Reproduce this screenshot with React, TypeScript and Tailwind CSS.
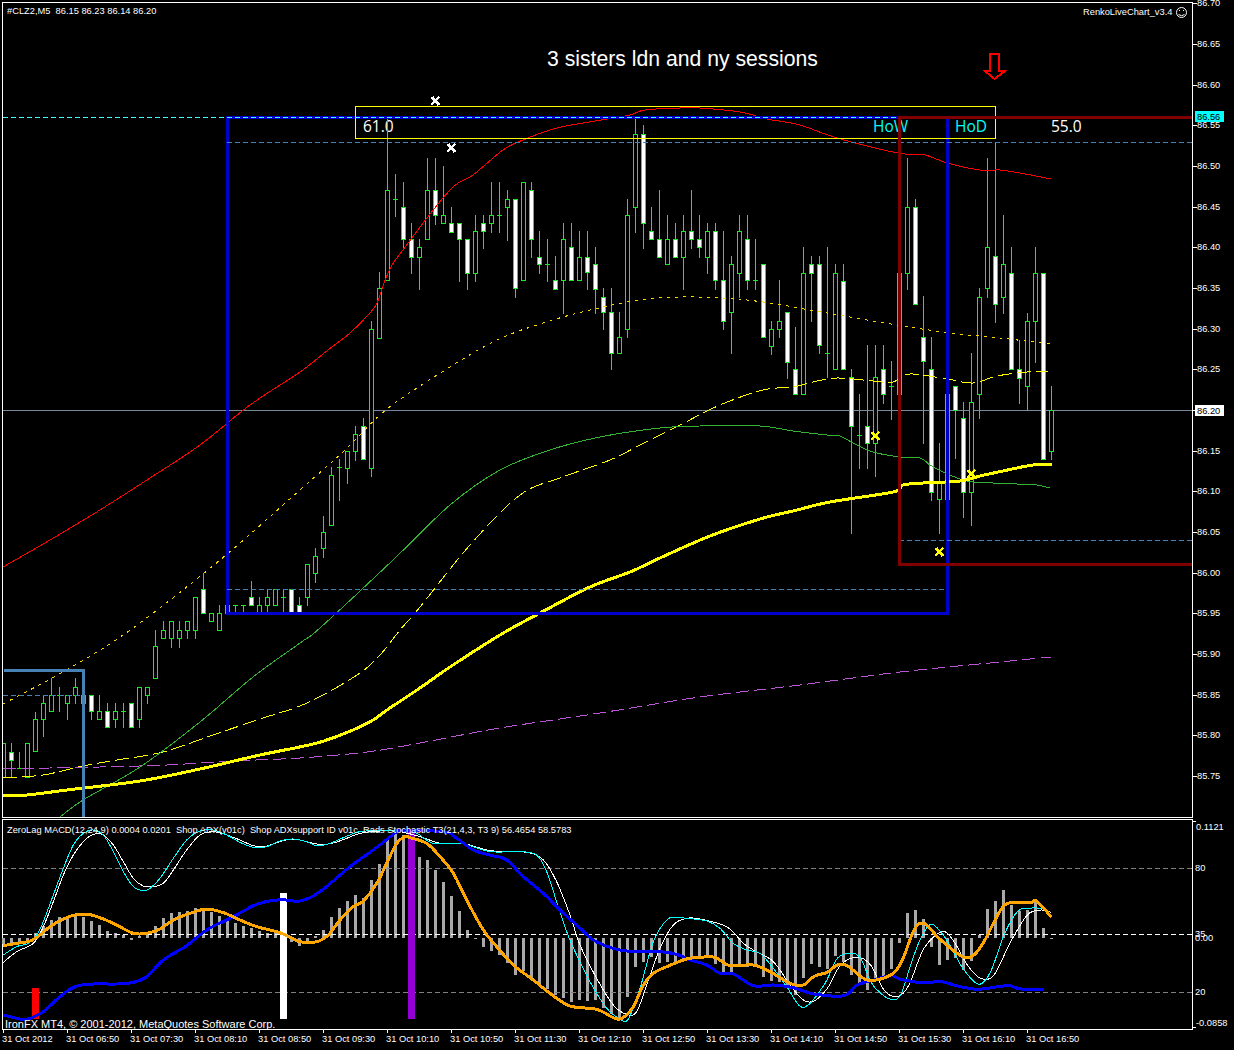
import React from "react";

type C = [number, number, number, number, number, number];
// x, high, body top, body bottom, low, filled (1 white, 0 hollow)
const candles: C[] = [
  [3,743,743,777,777,0],[11,743,752,760,777,1],[19,752,768,768,768,0],[27,743,743,777,777,0],[35,712,719,751,751,0],
  [43,695,703,719,736,0],[51,678,695,711,711,0],[59,687,695,695,711,0],[67,695,695,703,719,0],[75,678,687,695,703,0],
  [83,695,695,703,711,0],[91,695,695,711,719,1],[99,695,711,719,719,0],[107,703,711,727,727,1],[115,703,711,719,727,0],
  [123,703,711,711,727,0],[131,703,703,727,727,1],[139,687,687,719,727,0],[147,687,687,695,703,0],[155,630,646,678,678,0],
  [163,621,630,638,638,0],[171,621,621,638,647,0],[179,621,630,638,647,0],[187,621,621,630,638,0],[195,597,597,630,638,0],
  [203,573,589,613,613,1],[211,613,613,621,621,0],[219,605,613,630,630,0],[227,605,605,613,613,0],[235,605,605,605,613,0],
  [243,605,605,605,613,0],[251,581,597,605,605,1],[259,597,605,613,613,0],[267,589,597,605,613,0],[275,589,589,605,605,0],
  [283,589,597,597,613,0],[291,589,589,613,613,1],[299,597,605,613,613,1],[307,564,564,597,605,0],[315,548,556,573,582,0],
  [323,516,532,548,557,0],[331,467,475,525,525,0],[339,459,467,467,500,0],[347,451,451,468,483,0],[355,426,434,451,460,0],
  [363,418,426,459,459,1],[371,321,329,468,476,0],[379,272,288,338,338,0],[387,118,190,280,280,0],[395,174,199,199,216,0],
  [403,182,207,239,248,1],[411,223,239,257,273,1],[419,239,247,257,289,0],[427,158,190,239,239,0],[435,158,190,215,224,1],
  [443,166,215,223,223,0],[451,207,223,232,232,1],[459,223,223,239,281,1],[467,239,239,273,289,1],[475,215,231,273,281,0],
  [483,215,223,231,248,1],[491,182,215,223,232,0],[499,182,215,215,232,0],[507,190,199,207,240,0],[515,199,199,288,297,1],
  [523,182,182,280,280,0],[531,182,190,239,257,1],[539,231,257,264,273,1],[547,239,264,264,281,0],[555,256,280,289,289,1],
  [563,223,239,280,313,0],[571,223,247,280,280,1],[579,231,257,280,280,0],[587,231,257,272,289,1],[595,247,264,289,313,1],
  [603,288,297,312,329,1],[611,288,312,353,369,1],[619,312,337,353,353,0],[627,199,215,329,337,0],[635,119,134,207,232,0],
  [643,125,134,223,248,1],[651,207,231,239,239,1],[659,190,239,257,257,1],[667,215,239,264,264,0],[675,223,239,257,257,1],
  [683,215,231,257,289,0],[691,190,231,239,248,1],[699,215,239,247,257,1],[707,223,231,257,273,0],[715,223,231,280,289,1],
  [723,231,280,321,329,1],[731,256,264,312,353,0],[739,215,231,273,297,0],[747,215,239,280,289,1],[755,239,280,280,289,0],
  [763,264,264,337,337,1],[771,321,329,346,354,0],[779,280,321,329,337,0],[787,312,312,362,378,1],[795,327,369,394,394,1],
  [803,247,273,394,394,0],[811,256,264,273,321,1],[819,256,264,345,353,1],[827,247,353,353,377,0],[835,264,273,369,369,0],
  [843,264,281,369,369,1],[851,369,377,426,533,1],[859,394,435,435,468,0],[867,345,426,443,468,1],[875,345,377,443,476,0],
  [883,345,369,394,403,1],[891,361,386,386,419,0],[899,273,273,394,394,0],[907,158,207,273,289,0],[915,199,207,304,304,1],
  [923,296,337,361,443,1],[931,337,369,492,500,1],[939,443,483,499,533,0],[947,394,394,499,499,0],[955,386,386,410,458,1],
  [963,402,418,492,517,1],[971,353,402,492,525,0],[979,288,297,394,418,0],[987,158,247,288,297,0],[995,143,256,304,322,1],
  [1003,215,264,297,313,0],[1011,247,273,369,369,1],[1019,340,369,378,403,1],[1027,313,321,386,410,0],[1035,247,273,321,362,0],
  [1043,273,273,459,459,1],[1051,386,410,451,459,0],
];

const hist: number[] = [
  387,385,383,380,355,333,316,306,303,300,306,318,330,348,354,360,374,363,358,333,309,294,291,288,279,282,291,303,315,324,333,339,348,355,352,352,381,393,378,363,345,306,279,258,240,249,195,147,75,54,
  60,50,126,135,165,201,243,288,345,371,396,408,420,444,480,468,492,510,522,540,549,561,555,558,555,579,597,612,546,456,441,426,444,441,441,435,435,429,426,447,474,471,447,456,453,486,498,501,516,540,489,447,456,462,423,441,480,504,525,498,483,462,384,294,285,312,396,450,435,429,465,438,360,282,258,225,270,288,285,258,339,371,
];

type P = [number, number];
const smooth = (pts: P[]) => {
  let d = `M${pts[0][0]} ${pts[0][1]}`;
  for (let i = 0; i < pts.length - 1; i++) {
    const p0 = pts[Math.max(i - 1, 0)], p1 = pts[i], p2 = pts[i + 1], p3 = pts[Math.min(i + 2, pts.length - 1)];
    d += ` C${(p1[0] + (p2[0] - p0[0]) / 6).toFixed(1)} ${(p1[1] + (p2[1] - p0[1]) / 6).toFixed(1)} ${(p2[0] - (p3[0] - p1[0]) / 6).toFixed(1)} ${(p2[1] - (p3[1] - p1[1]) / 6).toFixed(1)} ${p2[0]} ${p2[1]}`;
  }
  return d;
};
const z = (ox: number, a: P[]): P[] => a.map(([x, y]) => [ox + x / 3, 815 + y / 3]);

const red: P[] = [[3,567],[50,540],[100,510],[150,478],[200,445],[250,405],[300,372],[328,350],[350,333],[370,313],[377,303],[384,283],[392,265],[403,250],[427,218],[453,187],[473,175],[503,150],[523,140],[557,128],[607,119],[630,115],[645,110],[680,108],[700,108],[740,112],[767,119],[800,125],[837,138],[898,153],[925,155],[947,163],[980,170],[1000,170],[1020,173],[1051,179]];
const gold: P[] = [[3,704],[70,668],[133,628],[220,560],[300,490],[345,450],[380,415],[417,388],[493,342],[553,320],[603,307],[640,300],[680,297],[720,298],[763,302],[827,313],[897,325],[950,333],[1000,338],[1050,344]];
const yel: P[] = [[3,778],[43,775],[83,766],[117,760],[163,752],[213,735],[260,719],[307,703],[357,675],[380,655],[400,630],[420,607],[470,545],[520,495],[560,478],[610,460],[640,445],[680,425],[720,405],[763,390],[793,387],[813,382],[837,378],[873,381],[893,382],[910,374],[947,379],[973,383],[997,376],[1027,372],[1048,372]];
const green: P[] = [[60,817],[83,800],[140,767],[200,722],[253,677],[300,643],[320,628],[393,560],[450,505],[500,470],[550,450],[600,437],[660,428],[700,426],[760,426],[793,431],[827,435],[840,436],[853,443],[873,452],[900,457],[920,458],[930,465],[943,472],[960,479],[973,482],[993,483],[1017,484],[1037,485],[1050,488]];
const thick: P[] = [[3,795],[27,795],[67,790],[140,781],[200,769],[260,755],[317,743],[353,730],[373,720],[387,710],[420,688],[450,667],[500,635],[540,613],[590,587],[630,572],[660,558],[710,536],[760,519],[793,511],[830,502],[893,492],[903,485],[923,483],[960,481],[980,476],[1003,471],[1033,465],[1052,465]];
const purple: P[] = [[3,769],[50,768],[100,767],[167,765],[233,761],[300,758],[367,752],[420,743],[500,728],[600,713],[700,697],[800,685],[900,672],[1000,662],[1051,657]];

const cyanL: P[] = [
  ...z(0,[[10,420],[50,395],[85,385],[110,360],[130,320],[160,240],[190,160],[220,90],[250,55],[280,45],[310,60],[340,110],[370,170],[400,215],[430,227],[450,220],[480,190],[520,130],[560,75],[600,48],[640,45],[680,60],[720,82],[760,97],[800,95],[840,78],[880,72],[920,80],[950,92],[990,85],[1030,68],[1080,50],[1140,47],[1200,47]]),
  ...z(400,[[50,55],[100,85],[190,87],[270,110],[360,110],[410,120],[440,170],[470,260],[500,350],[530,420],[570,500],[620,580],[660,612],[685,612],[720,520],[760,380],[800,315],[830,307],[860,310],[920,318],[960,340],[1000,385],[1040,405],[1080,415],[1120,460],[1160,515],[1210,577]]),
  ...z(814,[[30,510],[70,430],[110,415],[140,430],[170,500],[200,535],[232,553],[260,540],[290,450],[320,370],[350,328],[380,350],[410,395],[450,465],[495,508],[530,470],[570,360],[610,290],[640,280],[690,282],[712,305]]),
];
const whiteL: P[] = [
  ...z(0,[[10,442],[50,410],[100,385],[130,335],[160,260],[190,180],[220,120],[250,80],[280,58],[310,60],[340,90],[370,140],[400,190],[430,213],[460,215],[490,205],[520,165],[560,105],[600,60],[640,50],[680,60],[720,75],[760,92],[800,93],[840,80],[880,72],[920,80],[960,88],[1000,84],[1040,70],[1080,55],[1140,48],[1200,50]]),
  ...z(400,[[70,68],[120,85],[200,88],[270,107],[380,112],[430,135],[470,200],[510,300],[540,390],[590,490],[640,570],[680,598],[710,590],[740,510],[780,400],[820,330],[860,310],[900,312],[980,335],[1030,385],[1060,405],[1120,440],[1170,510],[1210,555]]),
  ...z(814,[[0,558],[40,520],[80,450],[130,427],[170,450],[210,525],[250,545],[285,510],[330,400],[385,350],[420,380],[460,450],[500,490],[540,480],[590,380],[640,300],[680,285],[712,292]]),
];
const orange: P[] = [
  ...z(0,[[10,392],[50,385],[90,378],[120,360],[150,335],[190,312],[230,299],[270,299],[310,312],[350,330],[400,355],[440,355],[480,342],[520,315],[570,295],[620,282],[670,293],[720,315],[770,335],[830,350],[860,362],[900,380],[950,380],[985,360],[1020,315],[1060,275],[1090,258],[1130,205],[1160,145],[1190,85],[1215,65]]),
  ...z(400,[[30,68],[80,85],[120,125],[160,175],[200,255],[250,345],[290,395],[340,450],[400,495],[450,535],[510,573],[590,583],[640,608],[665,610],[700,575],[730,510],[760,475],[800,455],[860,432],[900,427],[945,427],[990,452],[1060,450],[1110,470],[1170,505],[1210,510]]),
  ...z(814,[[0,484],[40,472],[70,450],[100,452],[160,495],[230,480],[265,435],[300,345],[330,325],[370,365],[410,400],[450,427],[480,420],[510,380],[560,285],[590,263],[650,263],[665,257],[690,280],[712,307]]),
];
const blueL: P[] = [
  ...z(0,[[10,600],[60,612],[90,610],[130,590],[180,545],[225,515],[280,507],[350,507],[400,502],[440,485],[490,435],[560,392],[620,345],[700,305],[770,268],[840,254],[900,258],[960,230],[1050,155],[1120,105],[1190,50]]),
  ...z(400,[[0,47],[130,50],[170,70],[220,105],[270,120],[320,135],[370,185],[430,235],[480,285],[530,330],[580,375],[630,397],[680,408],[780,410],[830,418],[870,435],[920,450],[960,475],[1000,477],[1060,512],[1120,510],[1180,518]]),
  ...z(814,[[0,537],[90,542],[130,510],[180,495],[230,482],[260,493],[320,503],[380,500],[420,510],[490,523],[580,512],[620,522],[690,525]]),
];

const Line = ({ pts, c, w = 1, dash }: { pts: P[]; c: string; w?: number; dash?: string }) => (
  <path d={smooth(pts)} fill="none" stroke={c} strokeWidth={w} strokeDasharray={dash} shapeRendering="crispEdges" />
);

const Candle = ({ d }: { d: C }) => {
  const [x, hi, top, bot, lo, f] = d;
  return (
    <g shapeRendering="crispEdges">
      <rect x={x} y={hi} width={1} height={lo - hi + 1} fill="#22e622" />
      {top === bot ? (
        <rect x={x - 2} y={top} width={5} height={1} fill="#22e622" />
      ) : (
        <rect x={x - 1.5} y={top + 0.5} width={4} height={bot - top} fill={f ? "#ffffff" : "#000000"} stroke="#22e622" strokeWidth={1} />
      )}
    </g>
  );
};

const Mark = ({ x, y, c }: { x: number; y: number; c: string }) => (
  <g stroke={c} shapeRendering="crispEdges" fill="none">
    <path d={`M${x - 4} ${y + 4} L${x + 4} ${y - 4}`} strokeWidth={2} />
    <path d={`M${x - 3} ${y - 4} L${x + 4} ${y + 4}`} strokeWidth={3} />
  </g>
);

const prices: [string, number][] = [
  ["86.70",3],["86.65",44],["86.60",85],["86.55",125],["86.50",166],["86.45",207],["86.40",247],["86.35",288],["86.30",329],["86.25",369],
  ["86.15",451],["86.10",491],["86.05",532],["86.00",573],["85.95",613],["85.90",654],["85.85",695],["85.80",735],["85.75",776],
];
const times: [string, number][] = [
  ["31 Oct 2012",3],["31 Oct 06:50",67],["31 Oct 07:30",131],["31 Oct 08:10",195],["31 Oct 08:50",259],["31 Oct 09:30",323],["31 Oct 10:10",387],["31 Oct 10:50",451],
  ["31 Oct 11:30",515],["31 Oct 12:10",579],["31 Oct 12:50",643],["31 Oct 13:30",707],["31 Oct 14:10",771],["31 Oct 14:50",835],["31 Oct 15:30",899],["31 Oct 16:10",963],["31 Oct 16:50",1027],
];
const small = "font-['Liberation_Sans',Arial,sans-serif] text-[9.3px]";
const thin = "font-['Open_Sans',sans-serif] text-[15.5px] font-normal";

export default function App() {
  return (
    <div className="flex h-[1050px] w-[1234px] flex-col overflow-hidden bg-black pl-[2px] pt-[2px] font-['Liberation_Sans',Arial,sans-serif] text-white">
      {/* main chart + price axis */}
      <div className="flex h-[816px]">
        <div className="h-[816px] w-[1191px] border border-white">
          <svg width={1189} height={814} viewBox="3 3 1189 814" className="block">
            <line x1={3} x2={1192} y1={410.5} y2={410.5} stroke="#778899" shapeRendering="crispEdges" />
            <text x={363} y={132} fill="#fff" className={thin}>61.0</text>
            <text x={873} y={132} fill="#00ffff" className={thin}>HoW</text>
            <text x={955} y={132} fill="#00ffff" className={thin}>HoD</text>
            <text x={1051} y={132} fill="#fff" className={thin}>55.0</text>
            {candles.map((d) => <Candle key={d[0]} d={d} />)}
            <Line pts={purple} c="#ba55d3" dash="13 5" />
            <Line pts={gold} c="#ffd700" dash="3 5" />
            <Line pts={yel} c="#ffff00" dash="14 5" />
            <Line pts={green} c="#32b432" />
            <Line pts={red} c="#ff0000" />
            <Line pts={thick} c="#ffff00" w={3} />

            <g fill="none" shapeRendering="crispEdges">
              <path d="M3.5 670.5H83.5V817" stroke="#4682b4" strokeWidth={3} />
              <line x1={3} x2={83} y1={695.5} y2={695.5} stroke="#4682b4" strokeDasharray="5 3" />
              <rect x={227.5} y={117.5} width={720} height={496} stroke="#0000cd" strokeWidth={3} />
              <line x1={227} x2={947} y1={589.5} y2={589.5} stroke="#4682b4" strokeDasharray="5 3" />
              <line x1={227} x2={1192} y1={142.5} y2={142.5} stroke="#4682b4" strokeDasharray="5 3" />
              <line x1={899} x2={1192} y1={540.5} y2={540.5} stroke="#4682b4" strokeDasharray="5 3" />
              <rect x={355.5} y={106.5} width={640} height={32} stroke="#ffff00" />
              <path d="M1192 117.5H899.5V564.5H1192" stroke="#800000" strokeWidth={3} />
              <line x1={3} x2={899} y1={117.5} y2={117.5} stroke="#40ffff" strokeDasharray="5 3" />
              <path d="M985 71 H990 V54 H999 V71 H1005 L994.5 79 Z" stroke="#ff0000" strokeWidth={2} />
            </g>

            <Mark x={435} y={101} c="#ffffff" />
            <Mark x={451} y={148} c="#ffffff" />
            <Mark x={875} y={436} c="#ffff00" />
            <Mark x={971} y={474} c="#ffff00" />
            <Mark x={939} y={552} c="#ffff00" />

            <text x={7} y={14} fill="#fff" className={small} xmlSpace="preserve">#CLZ2,M5  86.15 86.23 86.14 86.20</text>
            <text x={1083} y={15} fill="#fff" className={small}>RenkoLiveChart_v3.4</text>
            <g fill="none" stroke="#fff">
              <circle cx={1181.5} cy={12.5} r={5} />
              <path d="M1178.5 14.5 Q1181.5 17 1184.5 14.5" />
              <path d="M1179.5 10v1M1183.5 10v1" />
            </g>
            <text x={547} y={66} fill="#fff" className="text-[21.2px]">3 sisters ldn and ny sessions</text>
          </svg>
        </div>
        <svg width={41} height={816} viewBox="1193 2 41 816" className="block overflow-visible">
          {prices.map(([t, y]) => (
            <g key={t}>
              <rect x={1193} y={y} width={4} height={1} fill="#fff" shapeRendering="crispEdges" />
              <text x={1197} y={y + 3} fill="#fff" className={small}>{t}</text>
            </g>
          ))}
          <rect x={1195} y={111} width={29} height={11} fill="#00ffff" shapeRendering="crispEdges" />
          <text x={1197} y={120} fill="#000" className={small}>86.56</text>
          <rect x={1193} y={410} width={4} height={1} fill="#fff" shapeRendering="crispEdges" />
          <rect x={1195} y={405} width={29} height={11} fill="#fff" shapeRendering="crispEdges" />
          <text x={1197} y={414} fill="#000" className={small}>86.20</text>
        </svg>
      </div>

      {/* indicator window + axis */}
      <div className="mt-[1px] flex h-[211px]">
        <div className="h-[211px] w-[1191px] border border-white">
          <svg width={1189} height={209} viewBox="3 820 1189 209" className="block overflow-visible">
            <g shapeRendering="crispEdges">
              {hist.map((y, i) => {
                const x = 3 + i * 8;
                const yy = 815 + y / 3;
                return <rect key={i} x={x - 1} y={Math.min(yy, 938)} width={3} height={Math.max(Math.abs(yy - 938), 1)} fill="#a9a9a9" />;
              })}
              <line x1={3} x2={1192} y1={868.5} y2={868.5} stroke="#808080" strokeDasharray="5 3" />
              <line x1={3} x2={1192} y1={934.5} y2={934.5} stroke="#ffffff" strokeDasharray="5 3" />
              <line x1={3} x2={1192} y1={992.5} y2={992.5} stroke="#808080" strokeDasharray="5 3" />
              <rect x={32} y={988} width={7} height={31} fill="#ff0000" />
              <rect x={280} y={893} width={7} height={126} fill="#ffffff" />
              <rect x={408} y={831} width={7} height={188} fill="#9400d3" />
            </g>
            <Line pts={whiteL} c="#ffffff" />
            <Line pts={cyanL} c="#00ffff" />
            <Line pts={blueL} c="#0000ff" w={3} />
            <Line pts={orange} c="#ffa500" w={3} />
            <text x={7} y={833} fill="#fff" className={small} xmlSpace="preserve">ZeroLag MACD(12,24,9) 0.0004 0.0201  Shop ADX(v01c)  Shop ADXsupport ID v01c  Rads Stochastic T3(21,4,3, T3 9) 56.4654 58.5783</text>
            <text x={5} y={1028} fill="#fff" className="text-[11px]">IronFX MT4, © 2001-2012, MetaQuotes Software Corp.</text>
          </svg>
        </div>
        <svg width={41} height={211} viewBox="1193 819 41 211" className="block overflow-visible">
          <rect x={1193} y={821} width={3} height={1} fill="#fff" shapeRendering="crispEdges" />
          <rect x={1193} y={1027} width={3} height={1} fill="#fff" shapeRendering="crispEdges" />
          <text x={1196} y={830} fill="#fff" className={small}>0.1121</text>
          <text x={1195} y={871} fill="#fff" className={small}>80</text>
          <text x={1195} y={937} fill="#fff" className={small}>35</text>
          <text x={1195} y={941} fill="#fff" className={small}>0.00</text>
          <text x={1195} y={995} fill="#fff" className={small}>20</text>
          <text x={1196} y={1026} fill="#fff" className={small}>-0.0858</text>
        </svg>
      </div>

      {/* time axis */}
      <svg width={1232} height={18} viewBox="2 1030 1232 18" className="block overflow-visible">
        {times.map(([t, x]) => (
          <g key={t}>
            <rect x={x} y={1030} width={1} height={3} fill="#fff" shapeRendering="crispEdges" />
            <text x={x - 1} y={1042} fill="#fff" className={small}>{t}</text>
          </g>
        ))}
      </svg>
    </div>
  );
}
